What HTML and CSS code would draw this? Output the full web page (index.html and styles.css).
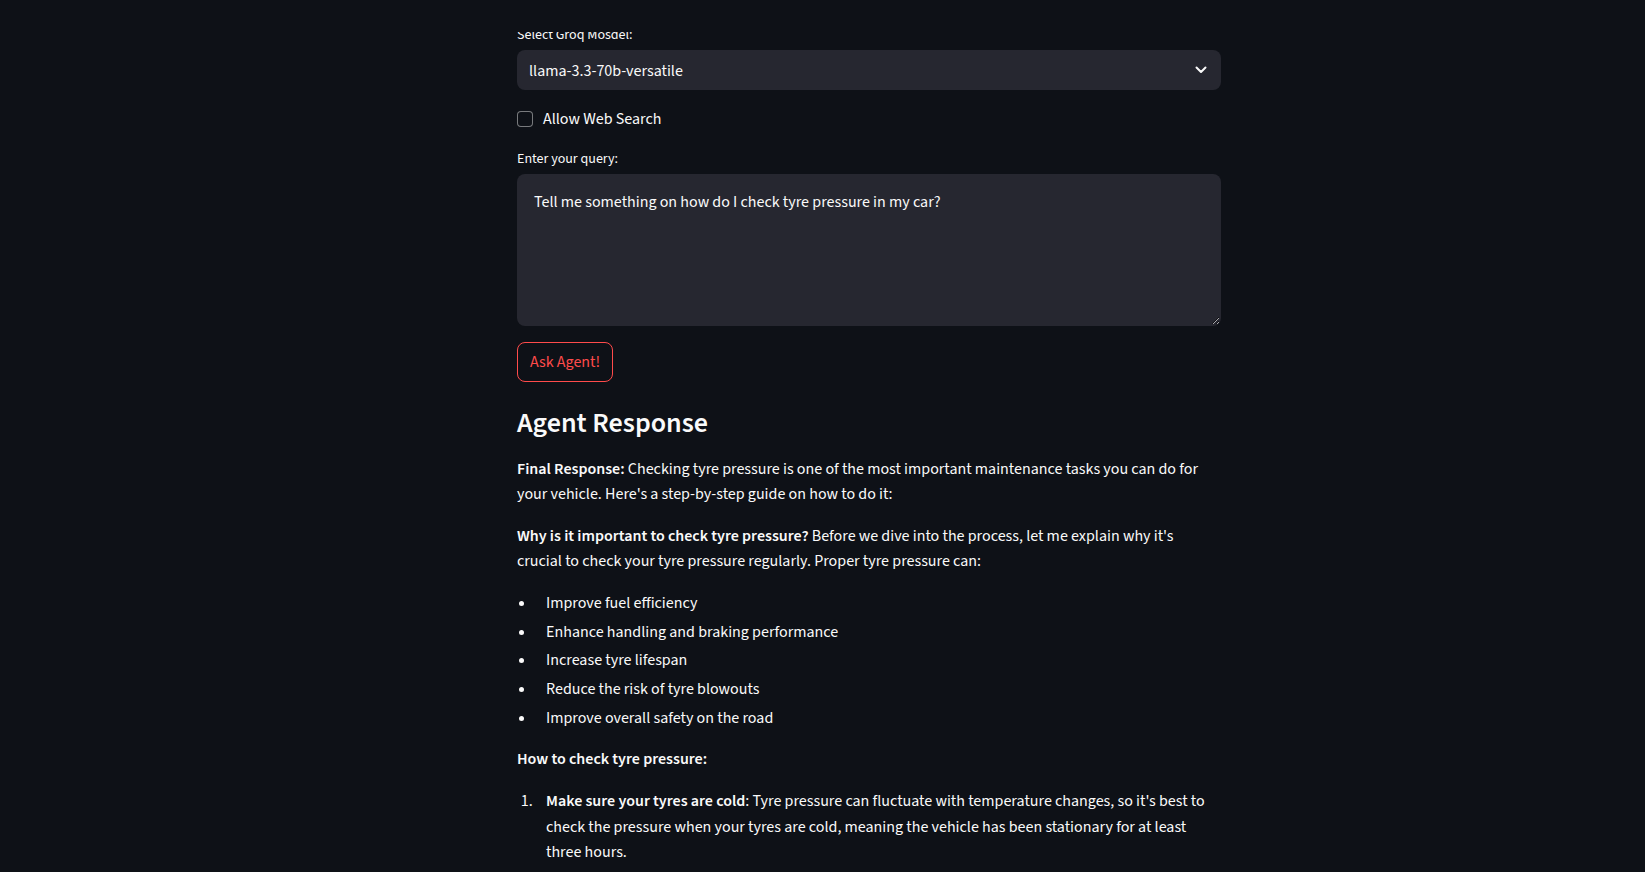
FILE: index.html
```html
<!DOCTYPE html>
<html lang="en">
<head>
<meta charset="utf-8">
<title>AI Agent</title>
<link rel="stylesheet" href="styles.css">
</head>
<body>
<header class="app-header"></header>
<main class="main">
  <div class="block">
    <div class="field">
      <label class="widget-label">Select Groq Mosdel:</label>
      <div class="select">
        <span class="select-value">llama-3.3-70b-versatile</span>
        <svg class="chevron" width="12" height="8" viewBox="0 0 12 8" aria-hidden="true"><path d="M1.5 1.5 L6 6 L10.5 1.5" fill="none" stroke="#fafafa" stroke-width="2" stroke-linecap="round" stroke-linejoin="round"/></svg>
      </div>
    </div>

    <label class="checkbox-row">
      <span class="checkbox"></span>
      <span class="checkbox-text">Allow Web Search</span>
    </label>

    <div class="field">
      <label class="widget-label">Enter your query:</label>
      <textarea class="textarea">Tell me something on how do I check tyre pressure in my car?</textarea>
    </div>

    <div class="button-row">
      <button class="btn">Ask Agent!</button>
    </div>

    <h3 class="heading">Agent Response</h3>

    <div class="markdown">
      <p><strong>Final Response:</strong> Checking tyre pressure is one of the most important maintenance tasks you can do for your vehicle. Here's a step-by-step guide on how to do it:</p>
      <p><strong>Why is it important to check tyre pressure?</strong> Before we dive into the process, let me explain why it's crucial to check your tyre pressure regularly. Proper tyre pressure can:</p>
      <ul>
        <li>Improve fuel efficiency</li>
        <li>Enhance handling and braking performance</li>
        <li>Increase tyre lifespan</li>
        <li>Reduce the risk of tyre blowouts</li>
        <li>Improve overall safety on the road</li>
      </ul>
      <p><strong>How to check tyre pressure:</strong></p>
      <ol>
        <li><strong>Make sure your tyres are cold</strong>: Tyre pressure can fluctuate with temperature changes, so it's best to check the pressure when your tyres are cold, meaning the vehicle has been stationary for at least three hours.</li>
      </ol>
    </div>
  </div>
</main>
</body>
</html>
```

FILE: styles.css
```css
* { box-sizing: border-box; }

html, body {
  margin: 0;
  padding: 0;
  height: 100%;
  overflow: hidden;
}

body {
  background: #0e1117;
  color: #fafafa;
  font-family: "Source Sans Pro", "Source Sans 3", Lato, "Noto Sans", sans-serif;
  font-size: 16px;
  line-height: 1.6;
}

.app-header {
  position: fixed;
  top: 0;
  left: 0;
  right: 0;
  height: 32px;
  background: #0e1117;
  z-index: 10;
}

.main {
  padding: 22px 0 0 517px;
}

.block {
  width: 704px;
  display: flex;
  flex-direction: column;
  gap: 16px;
}

.field {
  display: flex;
  flex-direction: column;
}

.widget-label {
  font-size: 14px;
  line-height: 24px;
  height: 25px;
  padding-top: 1px;
  margin-bottom: 3px;
  color: #fafafa;
}

.select {
  height: 40px;
  background: #262730;
  border-radius: 8px;
  display: flex;
  align-items: center;
  justify-content: space-between;
  padding: 3px 14px 0 12px;
}

.select-value {
  font-size: 16px;
  color: #fafafa;
}

.chevron {
  display: block;
  margin-top: -3px;
}

.checkbox-row {
  display: flex;
  align-items: center;
  height: 24px;
  gap: 10px;
  padding-top: 1px;
}

.checkbox {
  width: 16px;
  height: 16px;
  border: 1px solid rgba(250, 250, 250, 0.45);
  border-radius: 4px;
  background: #0e1117;
  flex: none;
}

.checkbox-text {
  font-size: 16px;
  padding-top: 3px;
}

.textarea {
  display: block;
  width: 100%;
  height: 152px;
  background: #262730;
  color: #fafafa;
  border: 1px solid transparent;
  border-radius: 8px;
  padding: 15px 16px;
  font: inherit;
  font-size: 16px;
  line-height: 1.6;
  resize: vertical;
  color-scheme: dark;
  outline: none;
}

.button-row { display: flex; }

.btn {
  height: 40px;
  padding: 2px 12px 0;
  background: #0e1117;
  color: #ff4b4b;
  border: 1px solid #ff4b4b;
  border-radius: 8px;
  font: inherit;
  font-size: 16px;
  cursor: pointer;
}

.heading {
  margin: 0 0 -17px;
  padding: 9px 0 0;
  font-size: 28px;
  line-height: 1.2;
  font-weight: 600;
  color: #fafafa;
}

.markdown {
  padding-top: 17px;
}

.markdown p {
  margin: 0 0 16px;
}

.markdown strong { font-weight: 600; }

.markdown ul, .markdown ol {
  margin: 0 0 16px;
  padding: 0;
}

.markdown li {
  margin: 3.1px 0 3.1px 19px;
  padding-left: 10px;
}

.markdown ol {
  margin-top: 1px;
}
```
